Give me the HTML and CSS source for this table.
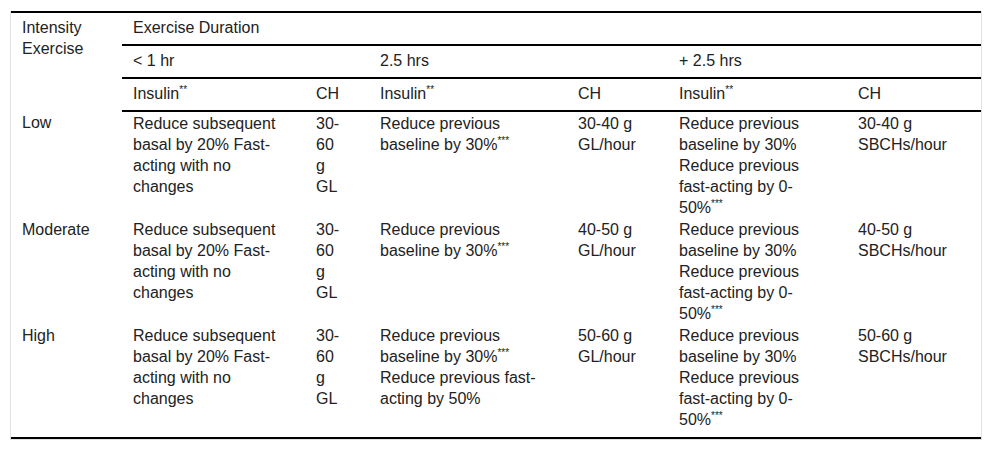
FILE: index.html
```html
<!DOCTYPE html>
<html lang="en">
<head>
<meta charset="utf-8">
<title>Exercise and insulin adjustments</title>
<link rel="stylesheet" href="styles.css">
</head>
<body>
<div class="wrap">
<table class="tbl">
<colgroup>
<col class="c1"><col class="c2"><col class="c3"><col class="c4"><col class="c5"><col class="c6"><col class="c7">
</colgroup>
<thead>
<tr>
<th rowspan="3" class="corner">Intensity Exercise</th>
<th colspan="6" class="hb">Exercise Duration</th>
</tr>
<tr>
<th colspan="2" class="hb">&lt; 1 hr</th>
<th colspan="2" class="hb">2.5 hrs</th>
<th colspan="2" class="hb">+ 2.5 hrs</th>
</tr>
<tr>
<th class="hb">Insulin<sup>**</sup></th>
<th class="hb">CH</th>
<th class="hb">Insulin<sup>**</sup></th>
<th class="hb">CH</th>
<th class="hb">Insulin<sup>**</sup></th>
<th class="hb">CH</th>
</tr>
</thead>
<tbody>
<tr>
<td>Low</td>
<td>Reduce subsequent basal by 20% Fast-acting with no changes</td>
<td>30-60 g GL</td>
<td>Reduce previous baseline by 30%<sup>***</sup></td>
<td>30-40 g GL/hour</td>
<td>Reduce previous baseline by 30% Reduce previous fast-acting by 0-50%<sup>***</sup></td>
<td>30-40 g SBCHs/hour</td>
</tr>
<tr>
<td>Moderate</td>
<td>Reduce subsequent basal by 20% Fast-acting with no changes</td>
<td>30-60 g GL</td>
<td>Reduce previous baseline by 30%<sup>***</sup></td>
<td>40-50 g GL/hour</td>
<td>Reduce previous baseline by 30% Reduce previous fast-acting by 0-50%<sup>***</sup></td>
<td>40-50 g SBCHs/hour</td>
</tr>
<tr class="last">
<td>High</td>
<td>Reduce subsequent basal by 20% Fast-acting with no changes</td>
<td>30-60 g GL</td>
<td>Reduce previous baseline by 30%<sup>***</sup> Reduce previous fast-acting by 50%</td>
<td>50-60 g GL/hour</td>
<td>Reduce previous baseline by 30% Reduce previous fast-acting by 0-50%<sup>***</sup></td>
<td>50-60 g SBCHs/hour</td>
</tr>
</tbody>
</table>
</div>
</body>
</html>
```
FILE: styles.css
```css
html, body {
  margin: 0;
  padding: 0;
  background: #fff;
}
body {
  font-family: "Liberation Sans", Arial, sans-serif;
  font-size: 16px;
  color: #222;
}
.wrap {
  margin: 11px 10px 0 10px;
  border: 1px solid #e2e2e2;
  border-top: 0;
}
.tbl {
  width: 100%;
  table-layout: fixed;
  border-collapse: collapse;
  border-top: 2px solid #000;
  border-bottom: 2px solid #000;
  line-height: 21px;
}
.c1 { width: 111px; }
.c2 { width: 183px; }
.c3 { width: 64px; }
.c4 { width: 198px; }
.c5 { width: 101px; }
.c6 { width: 179px; }
.c7 { width: 134px; }
.tbl th {
  font-weight: normal;
  text-align: left;
  vertical-align: top;
  padding: 4px 28px 6px 11px;
}
.tbl th.hb {
  border-bottom: 2px solid #000;
}
.tbl td {
  vertical-align: top;
  padding: 1px 28px 0 11px;
}
.tbl tr.last td {
  padding-bottom: 7px;
}
.tbl sup {
  font-size: 10px;
  line-height: 0;
  vertical-align: 6px;
}
```
